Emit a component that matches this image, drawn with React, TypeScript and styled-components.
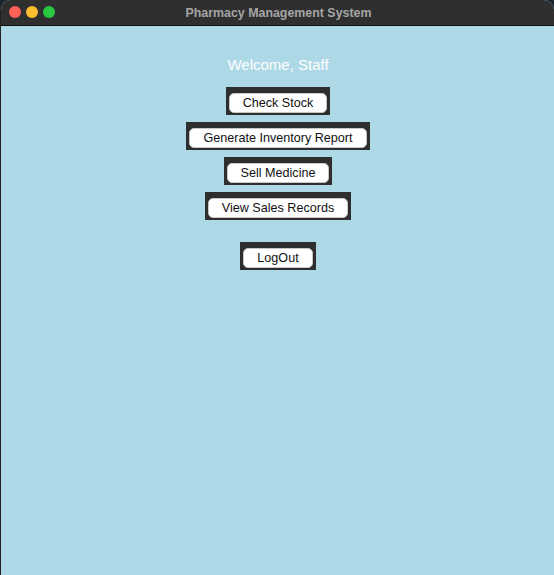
import React from "react";
import styled, { createGlobalStyle } from "styled-components";

const Global = createGlobalStyle`
  html, body { margin: 0; padding: 0; background: #1c2630; }
  body { font-family: "Liberation Sans", Arial, sans-serif; }
`;

const Window = styled.div`
  width: 554px;
  height: 575px;
  box-sizing: border-box;
  border-left: 1px solid #222;
  border-radius: 10px 10px 0 0;
  overflow: hidden;
  display: flex;
  flex-direction: column;
  background: #add8e6;
`;

const TitleBar = styled.div`
  height: 25px;
  flex: none;
  background: #2f2f2f;
  border-bottom: 1px solid #0c0c0c;
  position: relative;
  display: flex;
  align-items: center;
  justify-content: center;
`;

const Lights = styled.div`
  position: absolute;
  left: 8px;
  top: 6px;
  display: flex;
  gap: 5px;
`;

const Light = styled.span<{ $c: string }>`
  width: 12px;
  height: 12px;
  border-radius: 50%;
  background: ${(p) => p.$c};
`;

const Title = styled.div`
  color: #a5a5a5;
  font-weight: bold;
  font-size: 12.4px;
  padding-left: 2px;
`;

const Content = styled.div`
  flex: 1;
  display: flex;
  flex-direction: column;
  align-items: center;
  padding-top: 30px;
  padding-left: 1px;
`;

const Welcome = styled.div`
  color: #ffffff;
  font-size: 15px;
  line-height: 18px;
  margin-bottom: 13px;
`;

const Frame = styled.div<{ $mt?: number }>`
  background: #2e2e2e;
  padding: 6px 3px 2px;
  margin-top: ${(p) => p.$mt ?? 0}px;
  margin-bottom: 7px;
  display: flex;
`;

const Btn = styled.button`
  font-family: "Liberation Sans", Arial, sans-serif;
  font-size: 12.6px;
  color: #111;
  background: #ffffff;
  border: 1px solid #c8c8c8;
  border-radius: 5px;
  box-sizing: border-box;
  height: 20px;
  padding: 0 13px;
  line-height: 18px;
  cursor: pointer;
`;

const items = [
  "Check Stock",
  "Generate Inventory Report",
  "Sell Medicine",
  "View Sales Records",
];

export default function App() {
  return (
    <>
      <Global />
      <Window>
        <TitleBar>
          <Lights>
            <Light $c="#fe5f57" />
            <Light $c="#febc2e" />
            <Light $c="#28c840" />
          </Lights>
          <Title>Pharmacy Management System</Title>
        </TitleBar>
        <Content>
          <Welcome>Welcome, Staff</Welcome>
          {items.map((t) => (
            <Frame key={t}>
              <Btn>{t}</Btn>
            </Frame>
          ))}
          <Frame $mt={15}>
            <Btn>LogOut</Btn>
          </Frame>
        </Content>
      </Window>
    </>
  );
}
